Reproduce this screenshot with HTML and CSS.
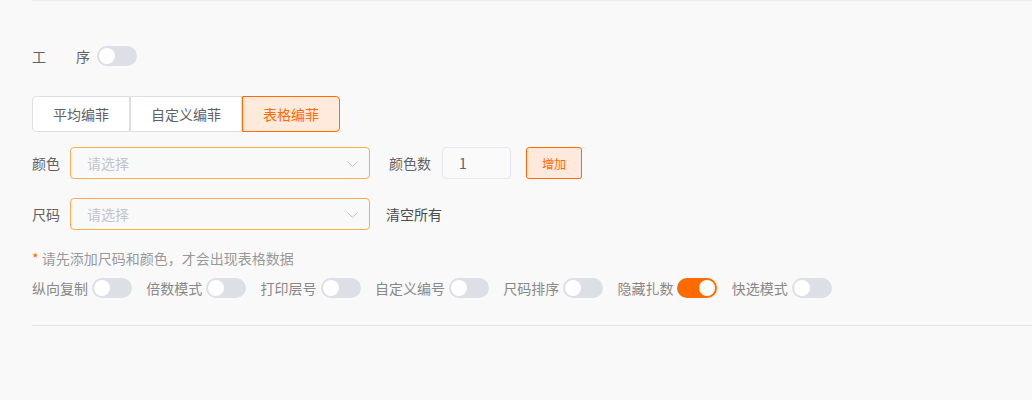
FILE: index.html
```html
<!DOCTYPE html>
<html lang="zh-CN">
<head>
<meta charset="utf-8">
<link rel="stylesheet" href="styles.css">
</head>
<body>
<div class="page">
  <div class="top-line"></div>
  <div class="content">
    <div class="process-row">
      <span class="process-label">工序</span>
      <span class="switch"><span class="knob"></span></span>
    </div>

    <div class="btn-group">
      <button class="seg">平均编菲</button>
      <button class="seg">自定义编菲</button>
      <button class="seg active">表格编菲</button>
    </div>

    <div class="form-row color-row">
      <span class="label">颜色</span>
      <div class="select">
        <span class="placeholder">请选择</span>
        <svg class="chevron" width="11" height="6" viewBox="0 0 11 6"><path d="M0.5 0.5 L5.5 5.5 L10.5 0.5" fill="none" stroke="#c0c4cc" stroke-width="1"/></svg>
      </div>
      <span class="label count-label">颜色数</span>
      <div class="num-input">1</div>
      <button class="add-btn">增加</button>
    </div>

    <div class="form-row size-row">
      <span class="label">尺码</span>
      <div class="select">
        <span class="placeholder">请选择</span>
        <svg class="chevron" width="11" height="6" viewBox="0 0 11 6"><path d="M0.5 0.5 L5.5 5.5 L10.5 0.5" fill="none" stroke="#c0c4cc" stroke-width="1"/></svg>
      </div>
      <span class="clear-all">清空所有</span>
    </div>

    <div class="hint"><span class="star">*</span> 请先添加尺码和颜色，才会出现表格数据</div>

    <div class="switch-row">
      <div class="sw-item"><span class="sw-label">纵向复制</span><span class="switch"><span class="knob"></span></span></div>
      <div class="sw-item"><span class="sw-label">倍数模式</span><span class="switch"><span class="knob"></span></span></div>
      <div class="sw-item"><span class="sw-label">打印层号</span><span class="switch"><span class="knob"></span></span></div>
      <div class="sw-item"><span class="sw-label">自定义编号</span><span class="switch"><span class="knob"></span></span></div>
      <div class="sw-item"><span class="sw-label">尺码排序</span><span class="switch"><span class="knob"></span></span></div>
      <div class="sw-item"><span class="sw-label">隐藏扎数</span><span class="switch on"><span class="knob"></span></span></div>
      <div class="sw-item"><span class="sw-label">快选模式</span><span class="switch"><span class="knob"></span></span></div>
    </div>
  </div>
  <div class="bottom-line"></div>
</div>
</body>
</html>
```

FILE: styles.css
```css
* { box-sizing: border-box; }

html, body {
  margin: 0;
  padding: 0;
  background: #f9f9f9;
  font-family: "Noto Sans CJK SC", "Noto Sans", "Liberation Sans", sans-serif;
  font-size: 14px;
  color: #606266;
}

.page {
  width: 1032px;
  height: 400px;
  overflow: hidden;
}

.top-line {
  height: 1px;
  margin-left: 32px;
  background: #ececec;
}

.content {
  padding-left: 32px;
  display: flex;
  flex-direction: column;
  align-items: flex-start;
}

.process-row {
  margin-top: 45px;
  height: 20px;
  display: flex;
  align-items: center;
}

.process-label {
  width: 58px;
  margin-right: 7px;
  text-align: justify;
  text-align-last: justify;
  line-height: 20px;
  color: #606266;
}

.switch {
  position: relative;
  display: inline-block;
  width: 40px;
  height: 20px;
  border-radius: 10px;
  background: #dcdfe6;
  flex-shrink: 0;
}

.switch .knob {
  position: absolute;
  top: 2px;
  left: 2px;
  width: 16px;
  height: 16px;
  border-radius: 50%;
  background: #fff;
}

.switch.on { background: #ff6a00; }
.switch.on .knob { left: 22px; }

.btn-group {
  margin-top: 30px;
  display: flex;
}

.seg {
  height: 36px;
  padding: 0 20px;
  margin: 0;
  font-family: inherit;
  font-size: 14px;
  color: #606266;
  background: #fff;
  border: 1px solid #dcdfe6;
  border-radius: 0;
  cursor: pointer;
}

.seg:first-child { border-radius: 4px 0 0 4px; }
.seg:last-child { border-radius: 0 4px 4px 0; }

.seg.active {
  color: #ff6a00;
  background: #ffeadb;
  border-color: #ff6a00;
}

.form-row {
  display: flex;
  align-items: center;
  height: 32px;
}

.color-row { margin-top: 15px; }
.size-row { margin-top: 19px; }

.label {
  color: #606266;
  margin-right: 10px;
  line-height: 20px;
}

.select {
  width: 300px;
  height: 32px;
  border: 1px solid #f9ad4f;
  border-radius: 4px;
  display: flex;
  align-items: center;
  justify-content: space-between;
  padding: 0 11px 0 16px;
}

.placeholder {
  color: #c0c4cc;
  font-size: 14px;
}

.chevron { display: block; margin-top: 1px; }

.count-label {
  margin-left: 19px;
  margin-right: 11px;
}

.num-input {
  width: 69px;
  height: 32px;
  border: 1px solid #e4e7ed;
  border-radius: 4px;
  background: #fafafa;
  padding-left: 16px;
  line-height: 30px;
  color: #606266;
}

.add-btn {
  margin-left: 15px;
  width: 56px;
  height: 32px;
  padding: 0;
  font-family: inherit;
  font-size: 12px;
  color: #ff6a00;
  background: #ffe9dc;
  border: 1px solid #ff6a00;
  border-radius: 3px;
}

.clear-all {
  margin-left: 16px;
  color: #4a4a4a;
}

.hint {
  margin-top: 18px;
  line-height: 20px;
  color: #999;
}

.hint .star { color: #ff6a00; }

.switch-row {
  margin-top: 10px;
  display: flex;
  align-items: center;
  gap: 14.3px;
}

.sw-item {
  display: flex;
  align-items: center;
  gap: 4px;
}

.sw-label {
  color: #888;
  line-height: 20px;
}

.bottom-line {
  margin-top: 27px;
  margin-left: 32px;
  height: 1px;
  background: #e4e4e4;
}
```
